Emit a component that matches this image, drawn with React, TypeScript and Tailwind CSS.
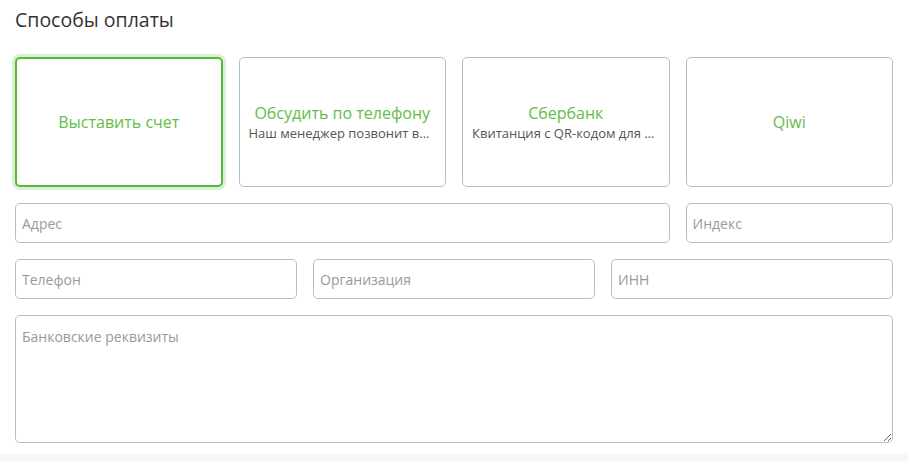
import React, { useState } from 'react';

interface PaymentMethod {
  id: string;
  title: string;
  description?: string;
}

const methods: PaymentMethod[] = [
  { id: 'invoice', title: 'Выставить счет' },
  { id: 'phone', title: 'Обсудить по телефону', description: 'Наш менеджер позвонит вам для уточнения деталей' },
  { id: 'sber', title: 'Сбербанк', description: 'Квитанция с QR-кодом для оплаты в отделении' },
  { id: 'qiwi', title: 'Qiwi' },
];

const inputClass =
  'block w-full h-[40px] rounded-[5px] border border-[#b4bcc4] bg-white px-[6px] text-[14px] text-[#333] placeholder:text-[#999] outline-none focus:border-[#55b83f]';

export default function App() {
  const [selected, setSelected] = useState('invoice');

  return (
    <div className="min-h-[461px] bg-[#f7f7f7] font-['Open_Sans',sans-serif]">
      <div className="bg-white px-[15px] pt-[6px] pb-[11px]">
        <h2 className="text-[19.5px] leading-[28px] text-[#333]">Способы оплаты</h2>

        <div className="mt-[23px] grid grid-cols-4 gap-[16px]">
          {methods.map((m) => {
            const active = m.id === selected;
            return (
              <button
                key={m.id}
                type="button"
                onClick={() => setSelected(m.id)}
                className={
                  active
                    ? 'flex h-[130px] min-w-0 flex-col items-center justify-center rounded-[5px] border-2 border-[#55b83f] bg-white px-[8px] shadow-[0_0_0_3px_#d9f1d2]'
                    : 'flex h-[130px] min-w-0 flex-col items-center justify-center rounded-[5px] border border-[#b4bcc4] bg-white px-[9px]'
                }
              >
                <span className="text-[16px] leading-[22px] text-[#62bd4a]">{m.title}</span>
                {m.description && (
                  <span className="block w-full truncate text-[13px] leading-[18px] text-[#555]">
                    {m.description}
                  </span>
                )}
              </button>
            );
          })}
        </div>

        <div className="mt-[16px] grid grid-cols-4 gap-[16px]">
          <input className={`${inputClass} col-span-3`} placeholder="Адрес" />
          <input className={inputClass} placeholder="Индекс" />
        </div>

        <div className="mt-[16px] grid grid-cols-3 gap-[16px]">
          <input className={inputClass} placeholder="Телефон" />
          <input className={inputClass} placeholder="Организация" />
          <input className={inputClass} placeholder="ИНН" />
        </div>

        <textarea
          className="mt-[16px] block h-[128px] w-full rounded-[5px] border border-[#b4bcc4] bg-white px-[6px] py-[10px] text-[14px] text-[#333] placeholder:text-[#999] outline-none"
          placeholder="Банковские реквизиты"
        />
      </div>
    </div>
  );
}
